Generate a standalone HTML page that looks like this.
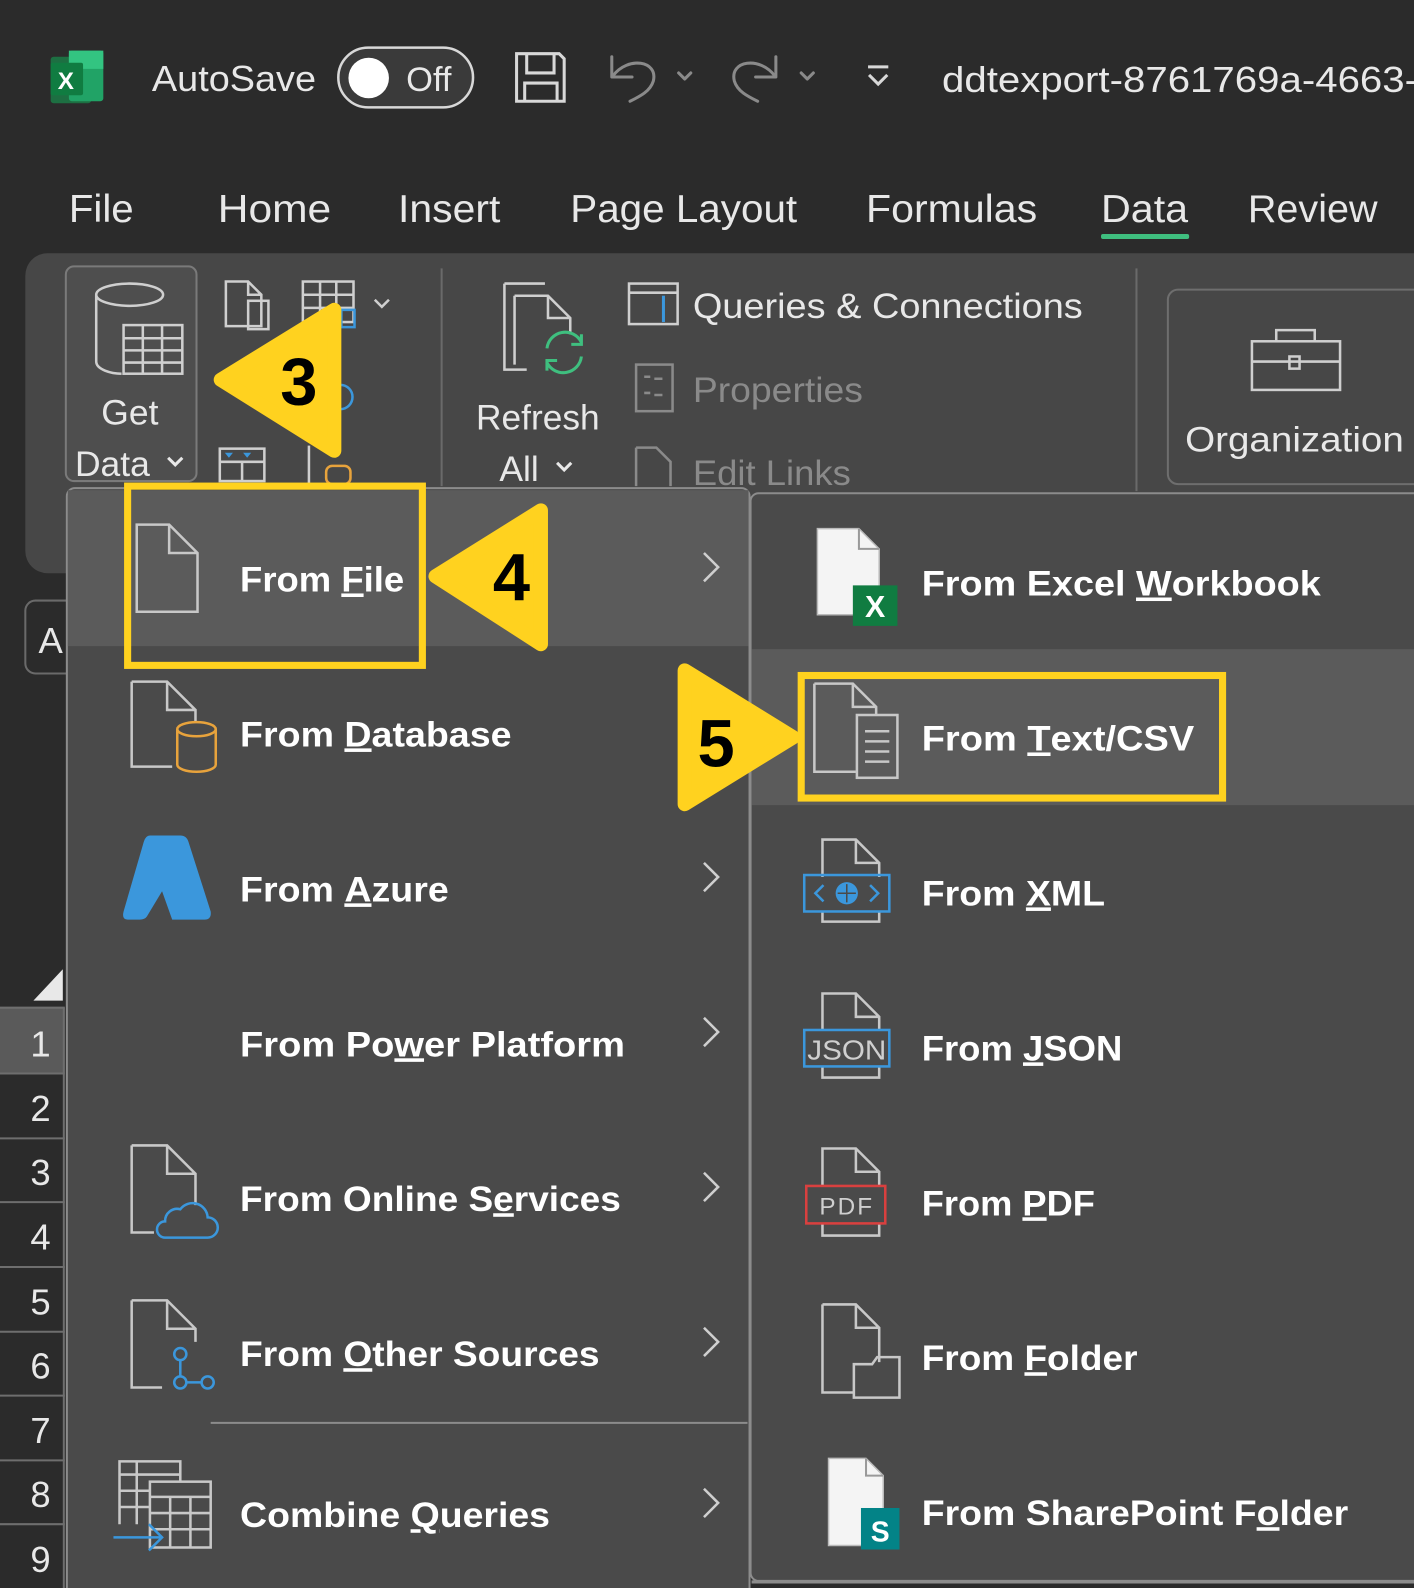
<!DOCTYPE html>
<html><head><meta charset="utf-8"><style>
html,body{margin:0;padding:0;background:#2b2b2b;width:1414px;height:1588px;overflow:hidden}
svg{display:block}
text{font-family:"Liberation Sans",sans-serif}
</style></head><body>
<svg width="1414" height="1588" viewBox="0 0 1396 1568" preserveAspectRatio="none" xmlns="http://www.w3.org/2000/svg">
<rect width="1396" height="1568" fill="#2b2b2b"/>
<!-- title bar -->
<rect x="50" y="56" width="40" height="46" rx="3" fill="#1d6f42"/>
<rect x="68" y="50" width="34" height="50" rx="3" fill="#21a366"/>
<rect x="68" y="50" width="34" height="18" fill="#33c481"/>
<rect x="50" y="62" width="32" height="32" rx="2" fill="#107c41"/>
<text x="57" y="88" font-size="24" font-weight="bold" fill="#fff">X</text>
<text x="150" y="90" font-size="36" fill="#e8e8e8" textLength="162" lengthAdjust="spacingAndGlyphs">AutoSave</text>
<rect x="334" y="47" width="133" height="59" rx="29.5" fill="#3a3a3a" stroke="#d8d8d8" stroke-width="2.5"/>
<circle cx="364" cy="77" r="20" fill="#fff"/>
<text x="401" y="90" font-size="34" fill="#e8e8e8">Off</text>
<g fill="none" stroke="#d8d8d8" stroke-width="3">
<path d="M510 53 H552 L557 58 V100 H510 Z"/><path d="M520 53 V72 H547 V53"/><path d="M518 100 V82 H550 V100"/>
</g>
<g fill="none" stroke="#8a8a8a" stroke-width="3" stroke-linecap="round" stroke-linejoin="round">
<path d="M604 56 V76 H624"/><path d="M605 75 C620 55 650 60 645 80 C642 90 632 95 622 100"/>
<path d="M670 72 L676 78 L682 72"/>
<path d="M766 56 V76 H746"/><path d="M765 75 C750 55 720 60 725 80 C728 90 738 95 748 100"/>
<path d="M791 72 L797 78 L803 72"/>
</g>
<g stroke="#d8d8d8" stroke-width="3" fill="none"><path d="M857 66 H877"/><path d="M858 74 L867 83 L876 74"/></g>
<text x="930" y="91" font-size="36" fill="#e8e8e8" textLength="470" lengthAdjust="spacingAndGlyphs">ddtexport-8761769a-4663-</text>
<!-- tabs -->
<g font-size="38" fill="#e8e8e8">
<text x="68" y="219" textLength="64" lengthAdjust="spacingAndGlyphs">File</text>
<text x="215" y="219" textLength="112" lengthAdjust="spacingAndGlyphs">Home</text>
<text x="393" y="219" textLength="101" lengthAdjust="spacingAndGlyphs">Insert</text>
<text x="563" y="219" textLength="224" lengthAdjust="spacingAndGlyphs">Page Layout</text>
<text x="855" y="219" textLength="169" lengthAdjust="spacingAndGlyphs">Formulas</text>
<text x="1087" y="219" textLength="86" lengthAdjust="spacingAndGlyphs">Data</text>
<text x="1232" y="219" textLength="128" lengthAdjust="spacingAndGlyphs">Review</text>
</g>
<rect x="1087" y="231" width="87" height="5" rx="2" fill="#3fbf7f"/>
<!-- ribbon -->
<rect x="25" y="250" width="1400" height="316" rx="22" fill="#474747"/>
<rect x="65" y="263" width="129" height="212" rx="8" fill="#4e4e4e" stroke="#7a7a7a" stroke-width="2"/>
<g fill="none" stroke="#cfcfcf" stroke-width="2.5">
<ellipse cx="128" cy="291" rx="33" ry="11"/><path d="M95 291 V357 C95 365 110 369 120 369"/>
<rect x="122" y="321" width="58" height="48"/><path d="M122 334 H180 M122 346 H180 M122 358 H180 M141 321 V369 M160 321 V369"/>
</g>
<text x="100" y="419" font-size="35" fill="#e8e8e8">Get</text>
<text x="74" y="470" font-size="35" fill="#e8e8e8">Data</text>
<path d="M166 452 L173 459 L180 452" stroke="#e8e8e8" stroke-width="3" fill="none"/>
<g fill="none" stroke="#cfcfcf" stroke-width="2.5">
<path d="M223 278 H245 L258 291 V322 H223 Z"/><path d="M245 278 V291 H258"/><rect x="245" y="297" width="20" height="28"/>
<rect x="299" y="278" width="50" height="40"/><path d="M299 291 H349 M299 304 H349 M316 278 V318 M332 278 V318"/>
<path d="M370 296 L377 303 L384 296"/>
<rect x="217" y="443" width="44" height="32"/><path d="M217 456 H261 M239 456 V475"/>
<path d="M305 440 V478"/>
</g>
<path d="M222 447 L230 447 L226 452Z M240 447 L248 447 L244 452Z" fill="#3b97dc"/>
<rect x="322" y="460" width="24" height="18" rx="6" fill="none" stroke="#e8a33c" stroke-width="2.5"/>
<circle cx="336" cy="392" r="12" fill="none" stroke="#3b97dc" stroke-width="2.5"/>
<path d="M337 306 h13 v17 h-13z" fill="none" stroke="#3b97dc" stroke-width="2.5"/>
<line x1="436" y1="265" x2="436" y2="480" stroke="#6a6a6a" stroke-width="2"/>
<g fill="none" stroke="#cfcfcf" stroke-width="2.5">
<path d="M498 280 V365 H520"/><path d="M498 280 H538"/><path d="M508 292 H541 L563 314 V330"/><path d="M508 292 V360"/><path d="M541 292 V314 H563"/>
</g>
<g fill="none" stroke="#3fbf7f" stroke-width="3"><path d="M540 344 A18 18 0 0 1 574 338"/><path d="M574 352 A18 18 0 0 1 540 358"/><path d="M574 330 V340 H564"/><path d="M540 366 V356 H550"/></g>
<text x="470" y="424" font-size="35" fill="#e8e8e8" textLength="122" lengthAdjust="spacingAndGlyphs">Refresh</text>
<text x="493" y="475" font-size="35" fill="#e8e8e8">All</text>
<path d="M550 457 L557 464 L564 457" stroke="#e8e8e8" stroke-width="3" fill="none"/>
<g fill="none" stroke="#cfcfcf" stroke-width="2.5"><rect x="621" y="280" width="48" height="40"/><path d="M621 289 H669"/></g>
<path d="M655 292 V318" stroke="#3b97dc" stroke-width="3"/>
<text x="684" y="314" font-size="35" fill="#e8e8e8" textLength="385" lengthAdjust="spacingAndGlyphs">Queries &amp; Connections</text>
<g fill="none" stroke="#8a8a8a" stroke-width="2.5"><rect x="628" y="360" width="36" height="46"/><path d="M636 372 h6 M646 374 h8 M636 388 h6 M646 390 h8"/>
<path d="M628 442 H648 L662 456 V480 M628 442 V480"/></g>
<text x="684" y="397" font-size="35" fill="#8a8a8a" textLength="168" lengthAdjust="spacingAndGlyphs">Properties</text>
<text x="684" y="479" font-size="35" fill="#8a8a8a" textLength="156" lengthAdjust="spacingAndGlyphs">Edit Links</text>
<line x1="1122" y1="265" x2="1122" y2="485" stroke="#6a6a6a" stroke-width="2"/>
<rect x="1153" y="286" width="260" height="192" rx="10" fill="#474747" stroke="#6e6e6e" stroke-width="2"/>
<g fill="none" stroke="#cfcfcf" stroke-width="2.5"><rect x="1236" y="337" width="87" height="48"/><path d="M1260 337 V326 H1298 V337"/><path d="M1236 357 H1323"/><rect x="1273" y="352" width="10" height="12"/></g>
<text x="1170" y="446" font-size="35" fill="#e8e8e8" textLength="216" lengthAdjust="spacingAndGlyphs">Organization</text>
<!-- name box / rows -->
<rect x="25" y="593" width="60" height="72" rx="10" fill="#2b2b2b" stroke="#6a6a6a" stroke-width="2"/>
<text x="38" y="645" font-size="36" fill="#e8e8e8">A</text>
<path d="M33 988 L62 957 V988Z" fill="#e8e8e8"/>
<rect x="0" y="995" width="64" height="65" fill="#5a5a5a"/>
<g stroke="#6e6e6e" stroke-width="2"><line x1="0" y1="995" x2="64" y2="995"/><line x1="0" y1="1060" x2="64" y2="1060"/><line x1="0" y1="1124" x2="64" y2="1124"/><line x1="0" y1="1187" x2="64" y2="1187"/><line x1="0" y1="1251" x2="64" y2="1251"/><line x1="0" y1="1315" x2="64" y2="1315"/><line x1="0" y1="1378" x2="64" y2="1378"/><line x1="0" y1="1442" x2="64" y2="1442"/><line x1="0" y1="1505" x2="64" y2="1505"/><line x1="63" y1="995" x2="63" y2="1568"/></g>
<g font-size="36" fill="#e8e8e8" text-anchor="middle">
<text x="40" y="1043">1</text><text x="40" y="1107">2</text><text x="40" y="1170">3</text><text x="40" y="1234">4</text><text x="40" y="1298">5</text><text x="40" y="1361">6</text><text x="40" y="1425">7</text><text x="40" y="1488">8</text><text x="40" y="1552">9</text>
</g>
<!-- left menu -->
<rect x="66" y="482" width="674" height="1100" rx="8" fill="#4a4a4a" stroke="#8c8c8c" stroke-width="2"/>
<rect x="67" y="484" width="672" height="154" fill="#5b5b5b"/>
<line x1="208" y1="1405" x2="738" y2="1405" stroke="#8c8c8c" stroke-width="2"/>
<g fill="none" stroke="#c8c8c8" stroke-width="2.5">
<path d="M135 518 H167 L195 546 V604 H135 Z"/><path d="M167 518 V546 H195"/>
<path d="M130 673 H165 L193 701 V713"/><path d="M130 673 V757 H170"/><path d="M165 673 V701 H193"/>
<path d="M130 1131 H165 L193 1159 V1190"/><path d="M130 1131 V1217 H152"/><path d="M165 1131 V1159 H193"/>
<path d="M130 1284 H165 L193 1312 V1325"/><path d="M130 1284 V1370 H160"/><path d="M165 1284 V1312 H193"/>
<path d="M118 1505 V1443 H178 V1462 M118 1456 H178 M118 1472 H148 M118 1488 H148 M135 1443 V1505"/>
<rect x="148" y="1463" width="60" height="65"/><path d="M148 1478 H208 M148 1494 H208 M148 1510 H208 M168 1478 V1528 M188 1478 V1528"/>
</g>
<g fill="none" stroke="#e8a33c" stroke-width="2.5"><path d="M175 720 V755 A19 7 0 0 0 213 755 V720"/><ellipse cx="194" cy="720" rx="19" ry="7"/></g>
<path d="M148 825 H178 Q184 825 186 831 L208 900 Q209 908 202 908 H170 L160 880 L145 905 Q143 908 138 908 H126 Q120 908 122 900 L142 831 Q144 825 148 825 Z" fill="#3b97dc"/>
<path d="M163 1222 H205 A10 10 0 0 0 205 1202 A15 15 0 0 0 178 1194 A12 12 0 0 0 163 1206 A8 8 0 0 0 163 1222 Z" fill="none" stroke="#3b97dc" stroke-width="2.5"/>
<g fill="none" stroke="#3b97dc" stroke-width="2.5"><circle cx="178" cy="1337" r="6"/><circle cx="178" cy="1365" r="6"/><circle cx="205" cy="1365" r="6"/><path d="M178 1343 V1359 M184 1365 H199"/></g>
<path d="M112 1518 H160 M147 1505 L160 1518 L147 1531" fill="none" stroke="#3b97dc" stroke-width="2.5"/>
<g font-size="35" font-weight="bold" fill="#ffffff">
<text x="237" y="584" textLength="162" lengthAdjust="spacingAndGlyphs">From <tspan text-decoration="underline">F</tspan>ile</text>
<text x="237" y="737" textLength="268" lengthAdjust="spacingAndGlyphs">From <tspan text-decoration="underline">D</tspan>atabase</text>
<text x="237" y="890" textLength="206" lengthAdjust="spacingAndGlyphs">From <tspan text-decoration="underline">A</tspan>zure</text>
<text x="237" y="1043" textLength="380" lengthAdjust="spacingAndGlyphs">From Po<tspan text-decoration="underline">w</tspan>er Platform</text>
<text x="237" y="1196" textLength="376" lengthAdjust="spacingAndGlyphs">From Online S<tspan text-decoration="underline">e</tspan>rvices</text>
<text x="237" y="1349" textLength="355" lengthAdjust="spacingAndGlyphs">From <tspan text-decoration="underline">O</tspan>ther Sources</text>
<text x="237" y="1508" textLength="306" lengthAdjust="spacingAndGlyphs">Combine <tspan text-decoration="underline">Q</tspan>ueries</text>
</g>
<g fill="none" stroke="#cfcfcf" stroke-width="2.5">
<path d="M695 546 L709 560 L695 574"/><path d="M695 852 L709 866 L695 880"/><path d="M695 1005 L709 1019 L695 1033"/><path d="M695 1158 L709 1172 L695 1186"/><path d="M695 1311 L709 1325 L695 1339"/><path d="M695 1470 L709 1484 L695 1498"/>
</g>
<!-- submenu -->
<rect x="741" y="487" width="680" height="1074" rx="8" fill="#4a4a4a" stroke="#8c8c8c" stroke-width="2"/>
<rect x="742" y="641" width="660" height="154" fill="#5b5b5b"/>
<line x1="742" y1="1562" x2="1396" y2="1562" stroke="#8c8c8c" stroke-width="3"/>
<path d="M807 522 H848 L868 542 V607 H807 Z" fill="#f4f4f4" stroke="#bbb" stroke-width="1.5"/>
<path d="M848 522 V542 H868" fill="none" stroke="#999" stroke-width="2"/>
<rect x="842" y="578" width="44" height="40" fill="#107c41"/>
<text x="864" y="609" font-size="30" font-weight="bold" fill="#fff" text-anchor="middle">X</text>
<g fill="none" stroke="#c8c8c8" stroke-width="2.5">
<path d="M804 675 H842 L865 698 V706"/><path d="M804 675 V762 H845"/><path d="M842 675 V698 H865"/>
<rect x="846" y="706" width="40" height="62"/><path d="M854 722 H878 M854 732 H878 M854 742 H878 M854 752 H878"/>
<path d="M812 866 V829 H845 L868 852 V866"/><path d="M845 829 V852 H868"/><path d="M812 900 V910 H868 V900"/>
<path d="M812 1016 V981 H845 L868 1004 V1016"/><path d="M845 981 V1004 H868"/><path d="M812 1053 V1064 H868 V1053"/>
<path d="M812 1171 V1134 H845 L868 1157 V1171"/><path d="M845 1134 V1157 H868"/><path d="M812 1208 V1220 H868 V1208"/>
<path d="M812 1288 H845 L868 1311 V1345"/><path d="M812 1288 V1375 H843"/><path d="M845 1288 V1311 H868"/>
<path d="M843 1380 V1347 H861 L866 1340 H888 V1380 Z"/>
</g>
<g fill="none" stroke="#3b97dc" stroke-width="2.5"><rect x="794" y="864" width="84" height="36"/><rect x="794" y="1017" width="84" height="36"/><path d="M813 874 L805 882 L813 890 M859 874 L867 882 L859 890"/></g>
<circle cx="836" cy="882" r="11" fill="#3b97dc"/>
<path d="M836 873 V891 M827 882 H845" stroke="#4a4a4a" stroke-width="1.5"/>
<text x="836" y="1046" font-size="27" fill="#cfcfcf" text-anchor="middle" textLength="78" lengthAdjust="spacingAndGlyphs">JSON</text>
<rect x="796" y="1171" width="78" height="37" fill="none" stroke="#d9403f" stroke-width="2.5"/>
<text x="836" y="1199" font-size="24" fill="#cfcfcf" text-anchor="middle" letter-spacing="2">PDF</text>
<path d="M818 1440 H855 L872 1457 V1526 H818 Z" fill="#f4f4f4" stroke="#bbb" stroke-width="1.5"/>
<path d="M855 1440 V1457 H872" fill="none" stroke="#999" stroke-width="2"/>
<rect x="850" y="1489" width="38" height="41" fill="#038387"/>
<text x="869" y="1522" font-size="28" font-weight="bold" fill="#fff" text-anchor="middle">S</text>
<g font-size="35" font-weight="bold" fill="#ffffff">
<text x="910" y="588" textLength="394" lengthAdjust="spacingAndGlyphs">From Excel <tspan text-decoration="underline">W</tspan>orkbook</text>
<text x="910" y="741" textLength="269" lengthAdjust="spacingAndGlyphs">From <tspan text-decoration="underline">T</tspan>ext/CSV</text>
<text x="910" y="894" textLength="181" lengthAdjust="spacingAndGlyphs">From <tspan text-decoration="underline">X</tspan>ML</text>
<text x="910" y="1047" textLength="198" lengthAdjust="spacingAndGlyphs">From <tspan text-decoration="underline">J</tspan>SON</text>
<text x="910" y="1200" textLength="171" lengthAdjust="spacingAndGlyphs">From <tspan text-decoration="underline">P</tspan>DF</text>
<text x="910" y="1353" textLength="213" lengthAdjust="spacingAndGlyphs">From <tspan text-decoration="underline">F</tspan>older</text>
<text x="910" y="1506" textLength="421" lengthAdjust="spacingAndGlyphs">From SharePoint F<tspan text-decoration="underline">o</tspan>lder</text>
</g>
<!-- annotations -->
<g fill="none" stroke="#ffd21f" stroke-width="7">
<rect x="126" y="480" width="291" height="177"/>
<rect x="791" y="667" width="416" height="121"/>
</g>
<g fill="#ffd21f" stroke="#ffd21f" stroke-width="14" stroke-linejoin="round">
<path d="M218 375 L330 306 V445 Z"/>
<path d="M430 569 L534 504 V636 Z"/>
<path d="M676 662 V794 L783 728 Z"/>
</g>
<g font-size="66" font-weight="bold" fill="#000" text-anchor="middle">
<text x="295" y="400">3</text>
<text x="505" y="593">4</text>
<text x="707" y="757">5</text>
</g>
</svg>
</body></html>
